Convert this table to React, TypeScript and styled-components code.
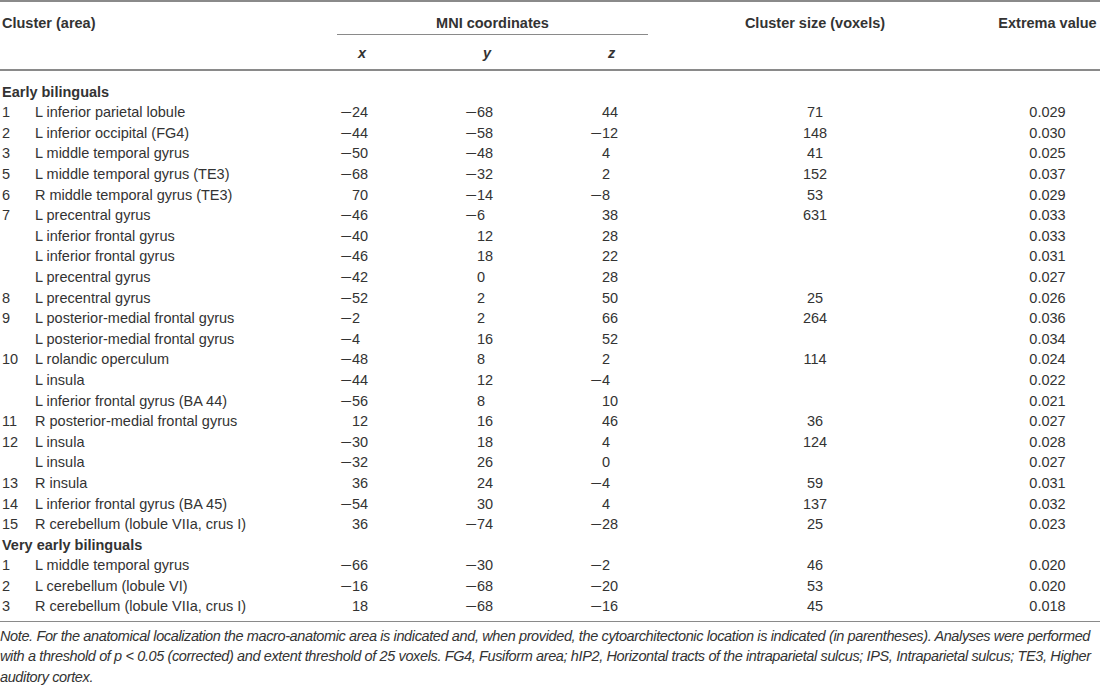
import React from "react";
import styled, { createGlobalStyle } from "styled-components";

const GlobalStyle = createGlobalStyle`
  html, body { margin: 0; padding: 0; background: #ffffff; }
  body {
    font-family: "Liberation Sans", Arial, Helvetica, sans-serif;
    color: #333333;
    font-size: 14.5px;
  }
`;

const COLS = "35px 305px 125px 125px 125px 200px 185px";
const LINE = "#8a8a8a";

const Table = styled.div`
  width: 1100px;
`;

const Head = styled.div`
  display: grid;
  grid-template-columns: ${COLS};
  grid-template-rows: auto auto;
  border-top: 2px solid ${LINE};
  border-bottom: 2px solid ${LINE};
  font-weight: bold;
  line-height: 20.6px;
`;

const ClusterHead = styled.div`
  grid-column: 1 / 3;
  grid-row: 1 / 3;
  padding: 10.7px 0 0 2px;
`;

const GroupHead = styled.div`
  grid-column: 3 / 6;
  grid-row: 1;
  margin: 0 67px 0 -3px;
  padding: 10.7px 0 1px;
  text-align: center;
  border-bottom: 1px solid ${LINE};
`;

const ColHead = styled.div<{ $col: number; $padLeft?: number }>`
  grid-column: ${(p) => p.$col};
  grid-row: 1;
  padding: 10.7px 0 1px ${(p) => p.$padLeft ?? 0}px;
  text-align: center;
  white-space: nowrap;
`;

const AxisHead = styled.div<{ $col: number }>`
  grid-column: ${(p) => p.$col};
  grid-row: 2;
  padding: 7.4px 0 5.7px 18px;
  font-style: italic;
`;

const Body = styled.div`
  padding: 10.7px 0 4px;
  border-bottom: 1px solid ${LINE};
`;

const Row = styled.div`
  display: grid;
  grid-template-columns: ${COLS};
  line-height: 20.6px;
  white-space: nowrap;
`;

const SectionTitle = styled.div`
  grid-column: 1 / -1;
  padding-left: 2px;
  font-weight: bold;
`;

const Num = styled.div`
  padding-left: 2px;
`;

const Name = styled.div``;

const Coord = styled.div`
  display: flex;
`;

const Sign = styled.span`
  display: inline-block;
  width: 12px;
`;

const Minus = styled.span`
  display: inline-block;
  transform: scaleX(1.4);
  transform-origin: left center;
`;

const Size = styled.div`
  text-align: center;
`;

const Extrema = styled.div`
  padding-left: 80px;
  text-align: center;
`;

const Note = styled.p`
  margin: 0;
  padding: 4px 0 0;
  font-style: italic;
  line-height: 20.4px;
  letter-spacing: -0.38px;
  white-space: nowrap;
`;

type R = [string, string, number, number, number, number | null, string];

const early: R[] = [
  ["1", "L inferior parietal lobule", -24, -68, 44, 71, "0.029"],
  ["2", "L inferior occipital (FG4)", -44, -58, -12, 148, "0.030"],
  ["3", "L middle temporal gyrus", -50, -48, 4, 41, "0.025"],
  ["5", "L middle temporal gyrus (TE3)", -68, -32, 2, 152, "0.037"],
  ["6", "R middle temporal gyrus (TE3)", 70, -14, -8, 53, "0.029"],
  ["7", "L precentral gyrus", -46, -6, 38, 631, "0.033"],
  ["", "L inferior frontal gyrus", -40, 12, 28, null, "0.033"],
  ["", "L inferior frontal gyrus", -46, 18, 22, null, "0.031"],
  ["", "L precentral gyrus", -42, 0, 28, null, "0.027"],
  ["8", "L precentral gyrus", -52, 2, 50, 25, "0.026"],
  ["9", "L posterior-medial frontal gyrus", -2, 2, 66, 264, "0.036"],
  ["", "L posterior-medial frontal gyrus", -4, 16, 52, null, "0.034"],
  ["10", "L rolandic operculum", -48, 8, 2, 114, "0.024"],
  ["", "L insula", -44, 12, -4, null, "0.022"],
  ["", "L inferior frontal gyrus (BA 44)", -56, 8, 10, null, "0.021"],
  ["11", "R posterior-medial frontal gyrus", 12, 16, 46, 36, "0.027"],
  ["12", "L insula", -30, 18, 4, 124, "0.028"],
  ["", "L insula", -32, 26, 0, null, "0.027"],
  ["13", "R insula", 36, 24, -4, 59, "0.031"],
  ["14", "L inferior frontal gyrus (BA 45)", -54, 30, 4, 137, "0.032"],
  ["15", "R cerebellum (lobule VIIa, crus I)", 36, -74, -28, 25, "0.023"],
];

const veryEarly: R[] = [
  ["1", "L middle temporal gyrus", -66, -30, -2, 46, "0.020"],
  ["2", "L cerebellum (lobule VI)", -16, -68, -20, 53, "0.020"],
  ["3", "R cerebellum (lobule VIIa, crus I)", 18, -68, -16, 45, "0.018"],
];

const CoordCell: React.FC<{ v: number }> = ({ v }) => (
  <Coord>
    <Sign>{v < 0 ? <Minus>{"\u2212"}</Minus> : null}</Sign>
    <span>{Math.abs(v)}</span>
  </Coord>
);

const DataRow: React.FC<{ r: R }> = ({ r }) => (
  <Row>
    <Num>{r[0]}</Num>
    <Name>{r[1]}</Name>
    <CoordCell v={r[2]} />
    <CoordCell v={r[3]} />
    <CoordCell v={r[4]} />
    <Size>{r[5] ?? ""}</Size>
    <Extrema>{r[6]}</Extrema>
  </Row>
);

export default function App() {
  return (
    <>
      <GlobalStyle />
      <Table>
        <Head>
          <ClusterHead>Cluster (area)</ClusterHead>
          <GroupHead>MNI coordinates</GroupHead>
          <ColHead $col={6}>Cluster size (voxels)</ColHead>
          <ColHead $col={7} $padLeft={80}>Extrema value</ColHead>
          <AxisHead $col={3}>x</AxisHead>
          <AxisHead $col={4}>y</AxisHead>
          <AxisHead $col={5}>z</AxisHead>
        </Head>
        <Body>
          <Row>
            <SectionTitle>Early bilinguals</SectionTitle>
          </Row>
          {early.map((r, i) => (
            <DataRow key={"e" + i} r={r} />
          ))}
          <Row>
            <SectionTitle>Very early bilinguals</SectionTitle>
          </Row>
          {veryEarly.map((r, i) => (
            <DataRow key={"v" + i} r={r} />
          ))}
        </Body>
        <Note>
          Note. For the anatomical localization the macro-anatomic area is indicated and, when provided, the
          cytoarchitectonic location is indicated (in parentheses). Analyses were performed
          <br />
          with a threshold of p {"<"} 0.05 (corrected) and extent threshold of 25 voxels. FG4, Fusiform area; hIP2,
          Horizontal tracts of the intraparietal sulcus; IPS, Intraparietal sulcus; TE3, Higher
          <br />
          auditory cortex.
        </Note>
      </Table>
    </>
  );
}
